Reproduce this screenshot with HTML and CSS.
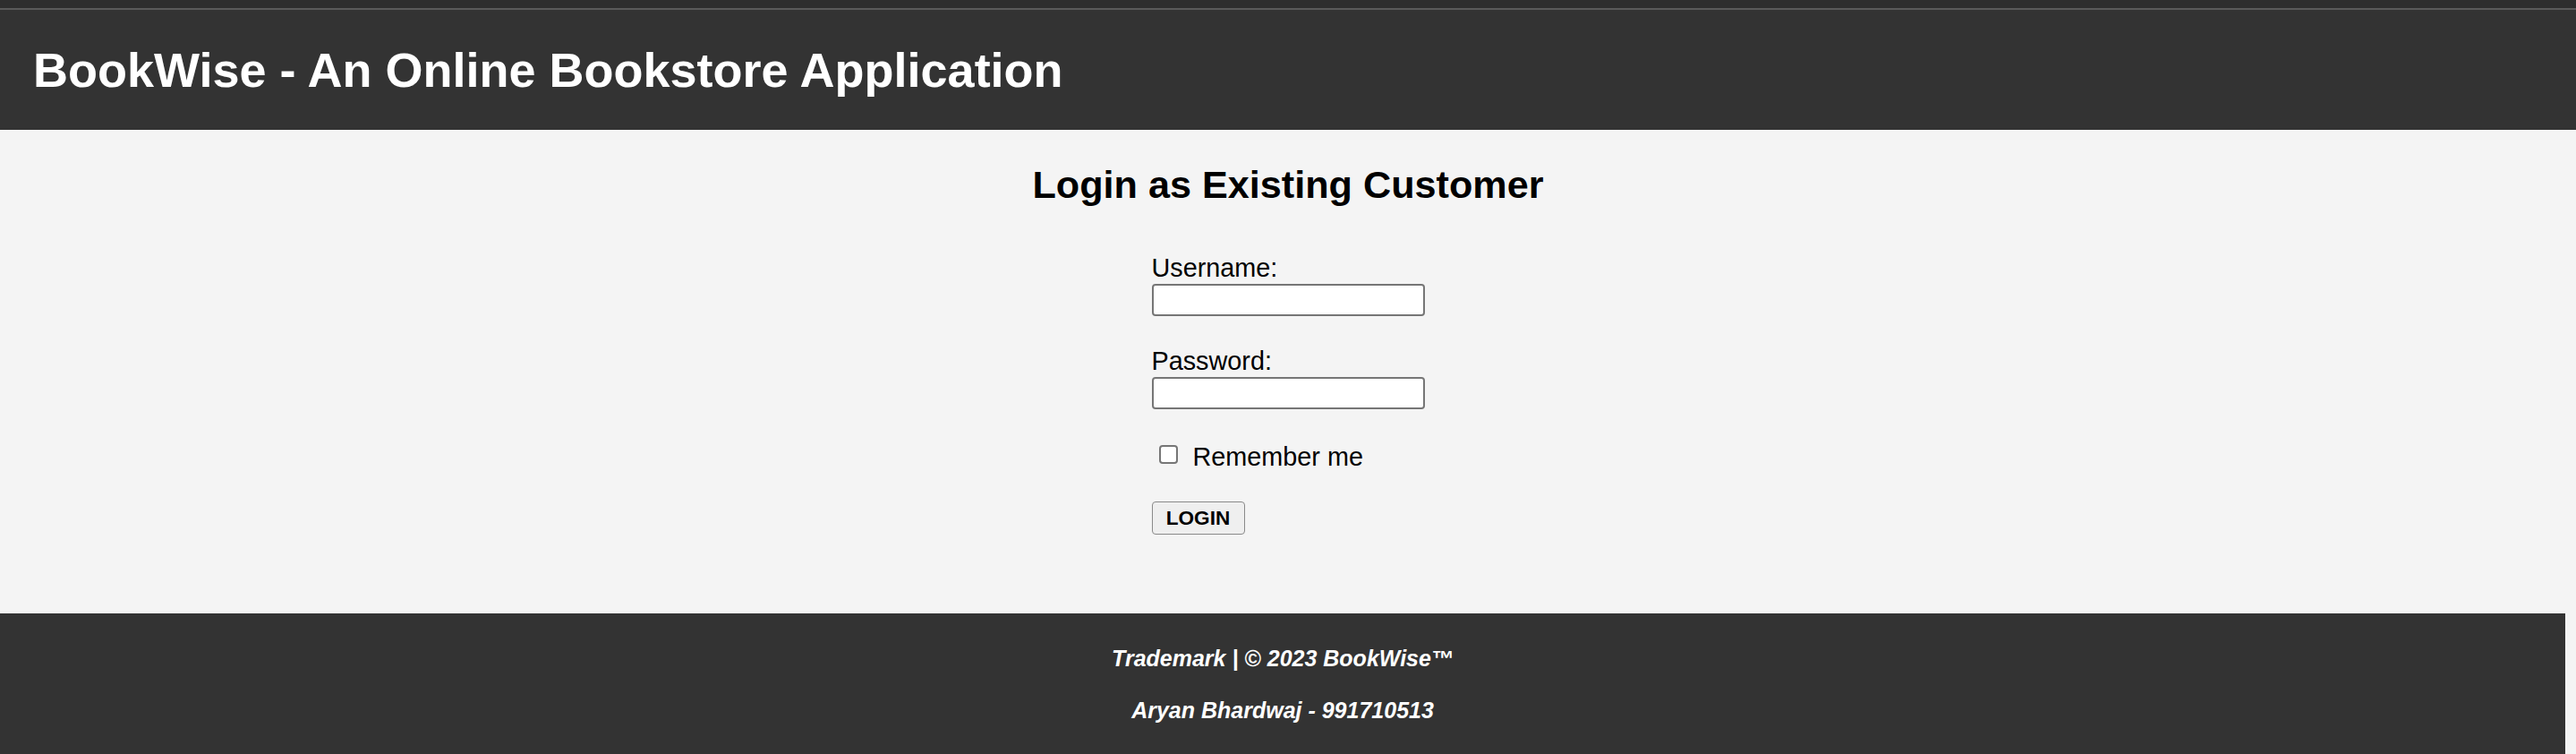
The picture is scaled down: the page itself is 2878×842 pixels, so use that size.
FILE: index.html
```html
<!DOCTYPE html>
<html lang="en">
<head>
<meta charset="utf-8">
<title>BookWise - Login</title>
<link rel="stylesheet" href="styles.css">
</head>
<body>
<div class="topbar"></div>
<header class="site-header">
  <h1 class="site-title">BookWise - An Online Bookstore Application</h1>
</header>
<main class="content">
  <h2 class="page-title">Login as Existing Customer</h2>
  <form class="login-form">
    <div class="field">
      <label class="field-label" for="username">Username:</label>
      <input class="field-input" type="text" id="username" name="username">
    </div>
    <div class="field">
      <label class="field-label" for="password">Password:</label>
      <input class="field-input" type="password" id="password" name="password">
    </div>
    <div class="remember">
      <input class="remember-box" type="checkbox" id="remember" name="remember">
      <label class="remember-label" for="remember">Remember me</label>
    </div>
    <button class="login-btn" type="button">LOGIN</button>
  </form>
</main>
<footer class="site-footer">
  <p class="footer-line">Trademark | © 2023 BookWise™</p>
  <p class="footer-line">Aryan Bhardwaj - 991710513</p>
</footer>
</body>
</html>
```

FILE: styles.css
```css
html, body {
  margin: 0;
  padding: 0;
}
body {
  background: #f4f4f4;
  font-family: "Liberation Sans", Arial, sans-serif;
  color: #000;
}
.topbar {
  height: 9px;
  background: #2e2e2e;
  border-bottom: 2px solid #5a5a5a;
}
.site-header {
  background: #333333;
  height: 134px;
  display: flex;
  align-items: center;
  padding-left: 37px;
}
.site-title {
  margin: 0;
  color: #ffffff;
  font-size: 54px;
  line-height: 62px;
  font-weight: bold;
}
.content {
  padding-bottom: 88px;
}
.page-title {
  margin: 36px 0 52px;
  text-align: center;
  font-size: 43.2px;
  line-height: 50px;
  font-weight: bold;
}
.login-form {
  width: 305px;
  margin: 0 auto;
  display: flex;
  flex-direction: column;
  align-items: flex-start;
}
.field {
  display: flex;
  flex-direction: column;
  margin-bottom: 34px;
}
.field-label {
  display: block;
  font-size: 28.8px;
  line-height: 33px;
  height: 33px;
}
.field-input {
  box-sizing: border-box;
  width: 305px;
  height: 36px;
  margin: 1px 0 0;
  border: 2px solid #767676;
  border-radius: 4px;
  background: #ffffff;
  padding: 2px 4px;
  font-size: 24px;
  font-family: "Liberation Sans", Arial, sans-serif;
}
.remember {
  display: flex;
  align-items: flex-start;
  height: 33px;
  margin-bottom: 33.5px;
  margin-top: 2.5px;
}
.remember-box {
  -webkit-appearance: none;
  appearance: none;
  box-sizing: border-box;
  width: 21px;
  height: 21px;
  margin: 3.5px 17px 0 8px;
  border: 2px solid #767676;
  border-radius: 4px;
  background: #ffffff;
}
.remember-label {
  font-size: 28.8px;
  line-height: 33px;
}
.login-btn {
  box-sizing: border-box;
  height: 37px;
  width: 104px;
  padding: 0;
  border: 1.5px solid #8a8a8a;
  border-radius: 4px;
  background: #efefef;
  color: #000;
  font-family: "Liberation Sans", Arial, sans-serif;
  font-size: 22.6px;
  font-weight: bold;
  line-height: 33px;
}
.site-footer {
  width: calc(100% - 12px);
  background: #333333;
  color: #ffffff;
  text-align: center;
  padding: 36px 0 40px;
}
.footer-line {
  margin: 0 0 29px;
  font-size: 25px;
  line-height: 29px;
  font-weight: bold;
  font-style: italic;
}
.footer-line:last-child {
  margin-bottom: 0;
}
```
